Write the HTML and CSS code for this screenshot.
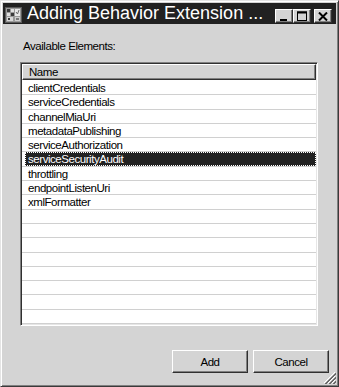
FILE: index.html
```html
<!DOCTYPE html>
<html>
<head>
<meta charset="utf-8">
<link rel="stylesheet" href="styles.css">
</head>
<body>
<div class="window">
  <div class="titlebar">
    <svg class="app-icon" width="17" height="16" viewBox="0 0 17 16">
      <rect x="0.5" y="0.5" width="16" height="15" fill="#9a9a9a" stroke="#5a5a5a"/>
      <rect x="2" y="2" width="3" height="3" fill="#3a3a3a"/>
      <rect x="6" y="2" width="3" height="3" fill="#e0e0e0"/>
      <rect x="2" y="6" width="3" height="3" fill="#e0e0e0"/>
      <rect x="6" y="6" width="3" height="3" fill="#3a3a3a"/>
      <rect x="10" y="2" width="5" height="7" fill="#e8e8e8"/>
      <path d="M11 5 L12.5 7 L14 3" stroke="#6a6a6a" fill="none"/>
      <rect x="2" y="10" width="6" height="4" fill="#d8d8d8"/>
      <rect x="3" y="11" width="2" height="2" fill="#3a3a3a"/>
      <rect x="10" y="10" width="5" height="4" fill="#cfcfcf"/>
      <rect x="11" y="11" width="3" height="2" fill="#7a7a7a"/>
    </svg>
    <span class="title">Adding Behavior Extension ...</span>
    <div class="caption-buttons">
      <button class="cap cap-min"><svg width="8" height="8" viewBox="0 0 8 8"><rect x="0" y="6" width="7" height="2" fill="#000"/></svg></button>
      <button class="cap cap-max"><svg width="10" height="10" viewBox="0 0 10 10"><rect x="0.5" y="1" width="9" height="8.5" fill="none" stroke="#000"/><rect x="0" y="0.5" width="10" height="2" fill="#000"/></svg></button>
      <button class="cap cap-close"><svg width="10" height="9" viewBox="0 0 10 9"><path d="M1 0.5 L9 8.5 M9 0.5 L1 8.5" stroke="#000" stroke-width="2"/></svg></button>
    </div>
  </div>
  <div class="client">
    <div class="label">Available Elements:</div>
    <div class="listview">
      <div class="lv-header"><span class="lv-col">Name</span></div>
      <div class="lv-rows">
        <div class="lv-row first">clientCredentials</div>
        <div class="lv-row">serviceCredentials</div>
        <div class="lv-row">channelMiaUri</div>
        <div class="lv-row">metadataPublishing</div>
        <div class="lv-row">serviceAuthorization</div>
        <div class="lv-row selected"><span class="sel-box">serviceSecurityAudit</span></div>
        <div class="lv-row">throttling</div>
        <div class="lv-row">endpointListenUri</div>
        <div class="lv-row">xmlFormatter</div>
        <div class="lv-row"></div>
        <div class="lv-row"></div>
        <div class="lv-row"></div>
        <div class="lv-row"></div>
        <div class="lv-row"></div>
        <div class="lv-row"></div>
        <div class="lv-row"></div>
        <div class="lv-row"></div>
        <div class="lv-row"></div>
        <div class="lv-row"></div>
      </div>
    </div>
    <div class="buttons">
      <button class="btn">Add</button>
      <button class="btn">Cancel</button>
    </div>
    <svg class="grip" width="13" height="13" viewBox="0 0 13 13">
      <path d="M12 1 L1 12 M12 5 L5 12 M12 9 L9 12" stroke="#ffffff" stroke-width="1"/>
      <path d="M13 2 L2 13 M13 3 L3 13 M13 6 L6 13 M13 7 L7 13 M13 10 L10 13 M13 11 L11 13" stroke="#6a6a6a" stroke-width="1"/>
    </svg>
  </div>
</div>
</body>
</html>
```

FILE: styles.css
```css
html, body {
  margin: 0;
  padding: 0;
  background: #d4d4d4;
}

.window {
  position: relative;
  box-sizing: border-box;
  width: 339px;
  height: 387px;
  padding: 2px;
  background: #d4d4d4;
  border-top: 1px solid #e4e4e4;
  border-left: 1px solid #e4e4e4;
  border-right: 1px solid #3a3a3a;
  border-bottom: 1px solid #3a3a3a;
  box-shadow: inset 1px 1px 0 #ffffff, inset -1px -1px 0 #808080;
  display: flex;
  flex-direction: column;
  font-family: "Liberation Sans", Arial, sans-serif;
}

.titlebar {
  height: 21px;
  background: #212121;
  display: flex;
  align-items: center;
  padding-left: 2px;
  flex-shrink: 0;
}

.app-icon {
  display: block;
  margin-top: 2px;
}

.title {
  color: #ffffff;
  font-size: 18px;
  line-height: 21px;
  margin-left: 5px;
  white-space: nowrap;
  flex: 1;
}

.caption-buttons {
  display: flex;
  align-items: center;
  margin-top: 5px;
  margin-right: 4px;
}

.cap {
  box-sizing: border-box;
  width: 18px;
  height: 14px;
  padding: 0;
  margin: 0;
  background: #d4d4d4;
  border-top: 1px solid #ffffff;
  border-left: 1px solid #ffffff;
  border-right: 1px solid #303030;
  border-bottom: 1px solid #303030;
  box-shadow: inset -1px -1px 0 #808080;
  display: flex;
  align-items: center;
  justify-content: center;
}

.cap svg {
  display: block;
}

.cap-min svg {
  margin-top: 1px;
}

.cap-close {
  margin-left: 3px;
}

.client {
  flex: 1;
  position: relative;
  display: flex;
  flex-direction: column;
  padding: 0 16px 0 17px;
}

.label {
  margin-top: 16px;
  font-size: 11.5px;
  letter-spacing: -0.45px;
  line-height: 13px;
  padding-left: 3px;
  color: #000;
}

.listview {
  box-sizing: border-box;
  margin-top: 9px;
  width: 298px;
  height: 264px;
  border-top: 1px solid #808080;
  border-left: 1px solid #808080;
  border-right: 1px solid #ffffff;
  border-bottom: 1px solid #ffffff;
  box-shadow: inset 1px 1px 0 #303030, inset -1px -1px 0 #e6e6e6;
  padding: 1px;
  background: #ffffff;
  overflow: hidden;
  display: flex;
  flex-direction: column;
}

.lv-header {
  box-sizing: border-box;
  height: 16px;
  flex-shrink: 0;
  background: #d4d4d4;
  border-top: 1px solid #ffffff;
  border-left: 1px solid #ffffff;
  border-right: 1px solid #303030;
  border-bottom: 1px solid #303030;
  box-shadow: inset -1px -1px 0 #808080;
  display: flex;
  align-items: center;
  padding-left: 6px;
}

.lv-col {
  font-size: 11.5px;
  letter-spacing: -0.45px;
  line-height: 13px;
  color: #000;
}

.lv-rows {
  flex: 1;
  overflow: hidden;
}

.lv-row {
  box-sizing: border-box;
  height: 14.3px;
  border-bottom: 1px solid #d0d0d0;
  font-size: 11.5px;
  letter-spacing: -0.45px;
  line-height: 13px;
  padding-left: 6px;
  padding-top: 1px;
  color: #000;
  white-space: nowrap;
}

.lv-row.first {
  height: 15.3px;
  padding-top: 2px;
}

.lv-row.selected {
  padding-left: 3px;
  padding-top: 0;
}

.sel-box {
  display: block;
  box-sizing: border-box;
  height: 13.3px;
  background: #222222;
  color: #ffffff;
  outline: 1px dotted #ffffff;
  outline-offset: -1px;
  padding-left: 3px;
  padding-top: 1px;
  line-height: 12px;
}

.buttons {
  display: flex;
  justify-content: flex-end;
  gap: 5px;
  margin-top: 24px;
  margin-right: -9px;
}

.btn {
  box-sizing: border-box;
  width: 76px;
  height: 23px;
  margin: 0;
  padding: 0;
  background: #d4d4d4;
  border-top: 1px solid #ffffff;
  border-left: 1px solid #ffffff;
  border-right: 1px solid #303030;
  border-bottom: 1px solid #303030;
  box-shadow: inset -1px -1px 0 #808080;
  font-family: "Liberation Sans", Arial, sans-serif;
  font-size: 11.5px;
  letter-spacing: -0.45px;
  color: #000;
}

.grip {
  position: absolute;
  right: 0;
  bottom: 0;
  display: block;
}
```
